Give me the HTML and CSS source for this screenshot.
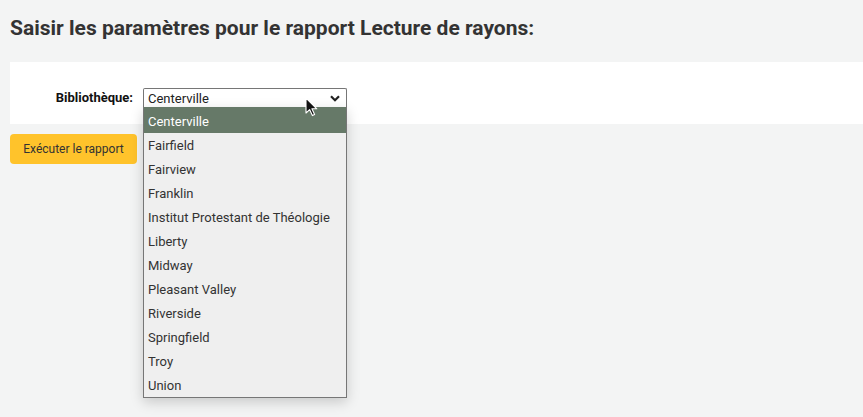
FILE: index.html
```html
<!DOCTYPE html>
<html lang="fr">
<head>
<meta charset="utf-8">
<title>Lecture de rayons</title>
<link rel="stylesheet" href="styles.css">
</head>
<body>
<main class="page">
  <h1 class="title">Saisir les paramètres pour le rapport Lecture de rayons:</h1>
  <form class="panel">
    <div class="field">
      <label class="label">Bibliothèque:</label>
      <div class="select-wrap">
        <div class="select">
          <span class="select-value">Centerville</span>
          <svg class="chevron" width="10" height="7" viewBox="0 0 10 7"><path d="M1 1.2 L5 5.2 L9 1.2" fill="none" stroke="#222" stroke-width="2.2"/></svg>
        </div>
        <ul class="options">
          <li class="option selected">Centerville</li>
          <li class="option">Fairfield</li>
          <li class="option">Fairview</li>
          <li class="option">Franklin</li>
          <li class="option">Institut Protestant de Théologie</li>
          <li class="option">Liberty</li>
          <li class="option">Midway</li>
          <li class="option">Pleasant Valley</li>
          <li class="option">Riverside</li>
          <li class="option">Springfield</li>
          <li class="option">Troy</li>
          <li class="option">Union</li>
        </ul>
        <svg class="cursor" width="14" height="20" viewBox="0 0 14 20"><path d="M1 1 L1 16 L4.6 12.6 L7.4 18.6 L9.6 17.6 L6.9 11.8 L11.8 11.8 Z" fill="#111" stroke="#fff" stroke-width="1.1" stroke-linejoin="round"/></svg>
      </div>
    </div>
  </form>
  <div class="actions">
    <button class="btn" type="button">Exécuter le rapport</button>
  </div>
</main>
</body>
</html>
```

FILE: styles.css
```css
html, body {
  margin: 0;
  padding: 0;
  background: #f3f4f4;
  font-family: Roboto, "Liberation Sans", sans-serif;
  color: #333;
}
body {
  min-height: 417px;
}
.page {
  padding: 14px 0 0 10px;
  min-height: 417px;
  box-sizing: border-box;
}
.title {
  margin: 0;
  font-size: 21px;
  font-weight: 700;
  line-height: 28px;
  color: #333;
}
.panel {
  margin-top: 20px;
  background: #fff;
  height: 62px;
  box-sizing: border-box;
  padding-top: 26px;
}
.field {
  display: flex;
  align-items: flex-start;
}
.label {
  width: 123px;
  text-align: right;
  font-size: 13px;
  font-weight: 700;
  color: #111;
  line-height: 19px;
  padding-right: 10px;
}
.select-wrap {
  position: relative;
  width: 204px;
}
.select {
  box-sizing: border-box;
  height: 19px;
  border: 1px solid #767676;
  border-bottom: none;
  border-radius: 2px 2px 0 0;
  background: #fff;
  display: flex;
  align-items: center;
  justify-content: space-between;
  padding: 0 6px 0 4px;
  font-size: 13px;
  color: #222;
}
.select-value {
  line-height: 18px;
  padding-top: 1px;
}
.chevron {
  display: block;
}
.options {
  position: absolute;
  top: 19px;
  left: 0;
  width: 204px;
  box-sizing: border-box;
  margin: 0;
  padding: 2px 0 0 0;
  list-style: none;
  background: #efefef;
  border: 1px solid #767676;
  border-top: none;
  box-shadow: 0 4px 12px rgba(0,0,0,0.18);
  z-index: 2;
}
.option {
  box-sizing: border-box;
  height: 24px;
  line-height: 24px;
  padding: 1px 0 0 4px;
  font-size: 13px;
  color: #333;
  white-space: nowrap;
}
.option.selected {
  height: 26px;
  margin-top: -2px;
  padding-top: 3px;
  background: #667968;
  color: #fff;
}
.cursor {
  position: absolute;
  left: 162px;
  top: 9px;
  z-index: 3;
}
.actions {
  padding-top: 10px;
}
.btn {
  width: 127px;
  height: 30px;
  border: none;
  border-radius: 4px;
  background: #ffc32b;
  color: #333;
  font-family: Roboto, "Liberation Sans", sans-serif;
  font-size: 12px;
  padding: 0;
  cursor: pointer;
}
```
